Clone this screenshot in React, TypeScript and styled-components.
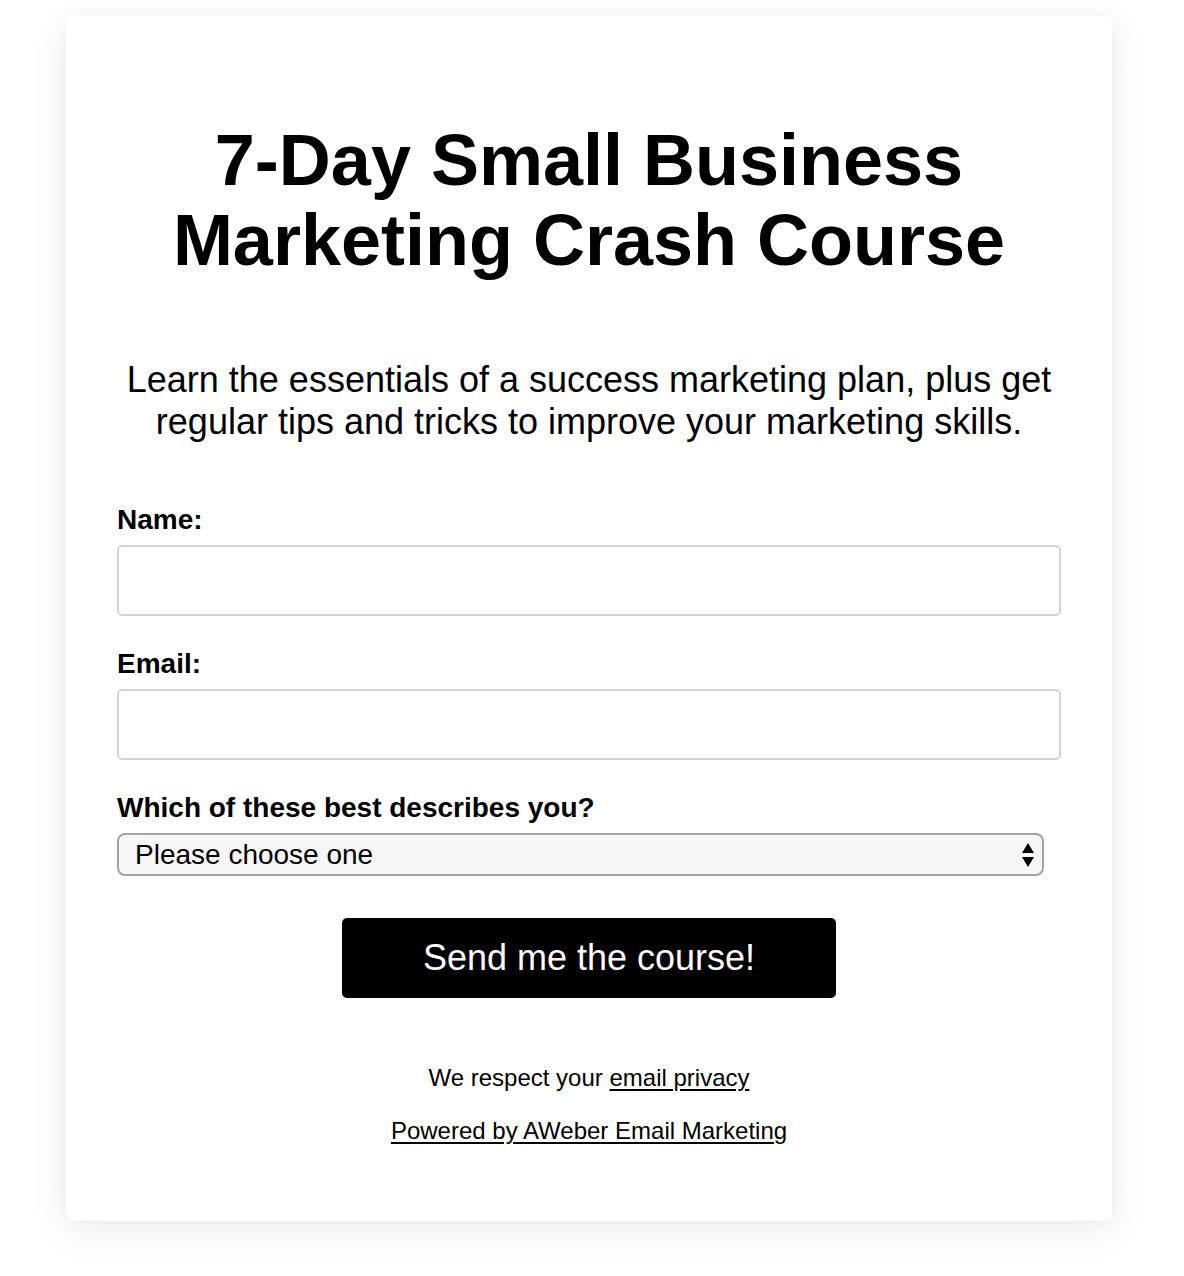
import React from "react";
import styled, { createGlobalStyle } from "styled-components";

const Global = createGlobalStyle`
  html, body { margin: 0; padding: 0; background: #fff; }
  body { font-family: "Liberation Sans", Arial, Helvetica, sans-serif; color: #000; }
  * { box-sizing: border-box; }
`;

const Page = styled.div`
  padding: 16px 72px 55px 66px;
`;

const Card = styled.div`
  width: 1046px;
  height: 1205px;
  background: #fff;
  border-radius: 8px;
  box-shadow: 0 10px 40px rgba(0, 0, 0, 0.07), 0 0 20px rgba(0, 0, 0, 0.04);
  padding: 104px 51px 0 51px;
  display: flex;
  flex-direction: column;
`;

const Title = styled.h1`
  margin: 0;
  text-align: center;
  font-size: 72px;
  line-height: 80px;
  font-weight: 700;
`;

const Lead = styled.p`
  margin: 79px 0 0;
  text-align: center;
  font-size: 36px;
  line-height: 42px;
`;

const Form = styled.form`
  display: flex;
  flex-direction: column;
  margin-top: 62px;
`;

const Label = styled.label<{ $gap?: number }>`
  display: block;
  font-size: 28px;
  line-height: 30px;
  font-weight: 700;
  margin-top: ${(p) => p.$gap ?? 0}px;
  margin-bottom: 10px;
`;

const Input = styled.input`
  width: 944px;
  height: 71px;
  border: 2px solid #d4d4d4;
  border-radius: 5px;
  background: #fff;
  font-size: 26px;
  padding: 0 16px;
`;

const SelectWrap = styled.div`
  position: relative;
  width: 927px;
  height: 43px;
`;

const Select = styled.select`
  appearance: none;
  width: 100%;
  height: 100%;
  border: 2px solid #a3a3a3;
  border-radius: 8px;
  background: #f7f7f7;
  font-family: "Liberation Sans", Arial, sans-serif;
  font-size: 28px;
  color: #000;
  padding: 0 40px 0 16px;
`;

const Arrows = styled.svg`
  position: absolute;
  right: 9px;
  top: 9px;
  pointer-events: none;
`;

const ButtonRow = styled.div`
  display: flex;
  justify-content: center;
  margin-top: 42px;
`;

const Button = styled.button`
  width: 494px;
  height: 80px;
  background: #000;
  color: #fff;
  border: none;
  border-radius: 5px;
  font-family: "Liberation Sans", Arial, sans-serif;
  font-size: 36px;
`;

const Footer = styled.div`
  margin-top: 67px;
  display: flex;
  flex-direction: column;
  align-items: center;
  gap: 27px;
  font-size: 24px;
  line-height: 26px;
`;

const Link = styled.a`
  color: #000;
  text-decoration: underline;
  text-underline-offset: 3px;
`;

export default function App() {
  return (
    <>
      <Global />
      <Page>
        <Card>
          <Title>
            7-Day Small Business
            <br />
            Marketing Crash Course
          </Title>
          <Lead>
            Learn the essentials of a success marketing plan, plus get
            <br />
            regular tips and tricks to improve your marketing skills.
          </Lead>
          <Form onSubmit={(e) => e.preventDefault()}>
            <Label htmlFor="name">Name:</Label>
            <Input id="name" type="text" />
            <Label htmlFor="email" $gap={33}>Email:</Label>
            <Input id="email" type="email" />
            <Label htmlFor="role" $gap={33}>Which of these best describes you?</Label>
            <SelectWrap>
              <Select id="role" defaultValue="">
                <option value="">Please choose one</option>
              </Select>
              <Arrows width="14" height="26" viewBox="0 0 14 26">
                <path d="M7 1 L13 11 L1 11 Z" fill="#000" />
                <path d="M1 15 L13 15 L7 25 Z" fill="#000" />
              </Arrows>
            </SelectWrap>
            <ButtonRow>
              <Button type="submit">Send me the course!</Button>
            </ButtonRow>
          </Form>
          <Footer>
            <div>
              We respect your <Link href="#">email privacy</Link>
            </div>
            <Link href="#">Powered by AWeber Email Marketing</Link>
          </Footer>
        </Card>
      </Page>
    </>
  );
}
